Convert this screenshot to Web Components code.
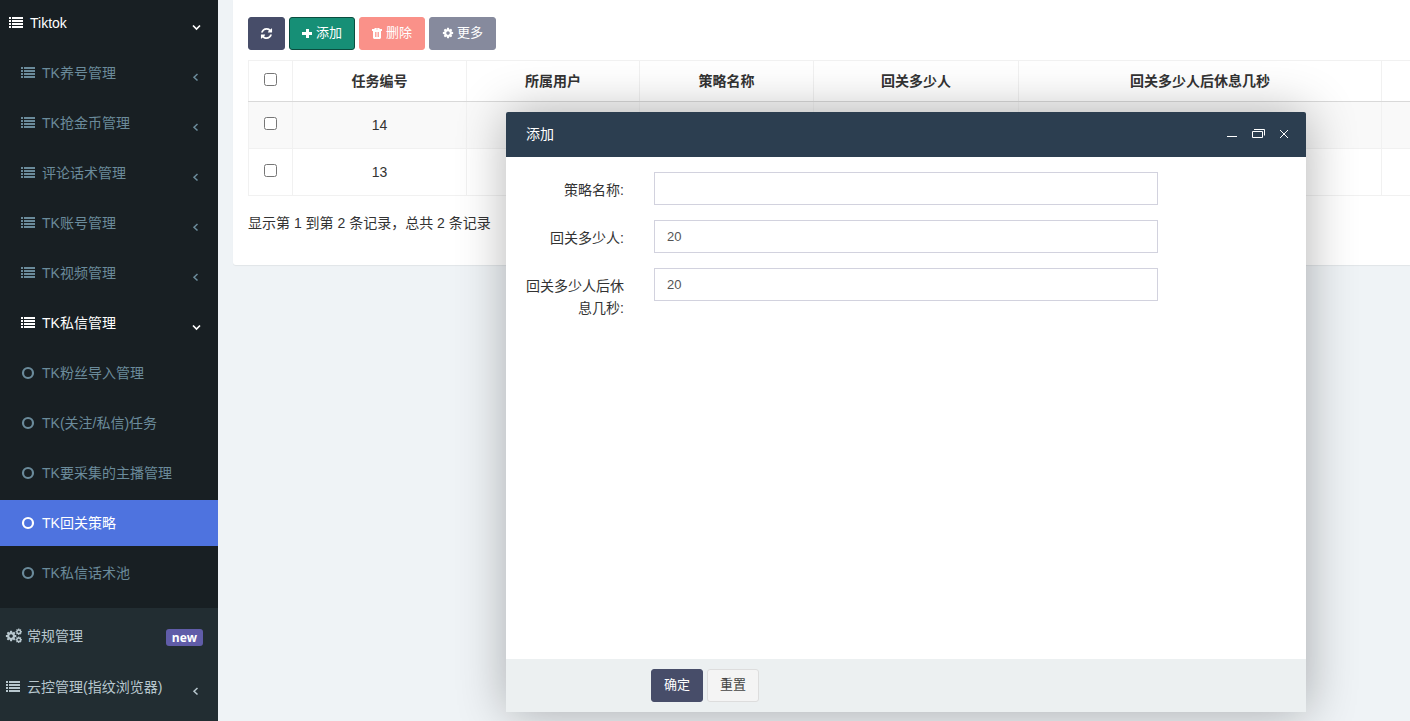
<!DOCTYPE html>
<html lang="zh-CN">
<head>
<meta charset="utf-8">
<title>TK回关策略</title>
<style>
  html, body { margin: 0; height: 100%; }
  body { font: 14px/20px "Liberation Sans", "Noto Sans CJK SC", sans-serif; color: #333; background: #eff3f6; overflow: hidden; }
</style>
</head>
<body>
<admin-app></admin-app>
<script>
const COG = 'M1152 896q0-106-75-181t-181-75-181 75-75 181 75 181 181 75 181-75 75-181zm512-109v222q0 12-8 23t-20 13l-185 28q-19 54-39 91 35 50 107 138 10 12 10 25t-9 23q-27 37-99 108t-94 71q-12 0-26-9l-138-108q-44 23-91 38-16 136-29 186-7 28-36 28h-222q-14 0-24.5-8.5t-11.5-21.5l-28-184q-49-16-90-37l-141 107q-10 9-25 9-14 0-25-11-126-114-165-168-7-10-7-23 0-12 8-23 15-21 51-66.5t54-70.5q-27-50-41-99l-183-27q-13-2-21-12.5t-8-23.5v-222q0-12 8-23t19-13l186-28q14-46 39-92-40-57-107-138-10-12-10-24 0-10 9-23 26-36 98.5-107.5t94.5-71.5q13 0 26 10l138 107q44-23 91-38 16-136 29-186 7-28 36-28h222q14 0 24.5 8.5t11.5 21.5l28 184q49 16 90 37l142-107q9-9 24-9 13 0 25 10 129 119 165 170 7 8 7 22 0 12-8 23-15 21-51 66.5t-54 70.5q26 50 41 98l183 28q13 2 21 12.5t8 23.5z';
const ICONS = {
  list: ['0 0 14 14', 14, '<path shape-rendering="crispEdges" d="M0 1h2v2H0zM3 1h11v2H3zM0 4h2v2H0zM3 4h11v2H3zM0 7h2v2H0zM3 7h11v2H3zM0 10h2v2H0zM3 10h11v2H3z"/>'],
  circle: ['0 0 14 14', 14, '<circle cx="7" cy="7" r="5" fill="none" stroke="currentColor" stroke-width="2.2"/>'],
  cogs: ['0 0 16 16', 16, `<g fill-rule="evenodd"><path transform="translate(-1 2) scale(.0068)" d="${COG}"/><path transform="translate(9 0) scale(.0042)" d="${COG}"/><path transform="translate(9 8) scale(.0042)" d="${COG}"/></g>`],
  left: ['0 0 8 8', 8, '<path d="M5.5 1 2 4.2 5.5 7.5" fill="none" stroke="currentColor" stroke-width="1.5"/>'],
  down: ['0 0 8 8', 8, '<path d="M1 2.5 4.5 6 8 2.5" fill="none" stroke="currentColor" stroke-width="1.7"/>'],
  cog: ['0 0 1792 1792', 12, `<path d="${COG}"/>`],
  plus: ['0 0 11 11', 11, '<path d="M4 1h3v3h3v3H7v3H4V7H0V4h4z"/>'],
  refresh: ['0 0 1792 1792', 13, '<path d="M1639 1056q0 5-1 7-64 268-268 434.5t-478 166.5q-146 0-282.5-55t-243.5-157l-129 129q-19 19-45 19t-45-19-19-45v-448q0-26 19-45t45-19h448q26 0 45 19t19 45-19 45l-137 137q71 66 161 102t187 36q134 0 250-65t186-179q11-17 53-117 8-23 30-23h192q13 0 22.5 9.5t9.5 22.5zm25-800v448q0 26-19 45t-45 19h-448q-26 0-45-19t-19-45 19-45l138-138q-148-137-349-137-134 0-250 65t-186 179q-11 17-53 117-8 23-30 23h-199q-13 0-22.5-9.5t-9.5-22.5v-7q65-268 270-434.5t480-166.5q146 0 284 55.5t245 156.5l130-129q19-19 45-19t45 19 19 45z"/>'],
  trash: ['0 0 11 11', 11, '<path fill-rule="evenodd" d="M3 0h4l1 1h2v2H9v7L8 11H2L1 10V3H0V1h2zM3 4v5h.8V4zM4.600 4v5h.8V4zM6.200 4v5H7V4zM4 .8h2v.5H4z"/>'],
  min: ['0 0 14 14', 14, '<path d="M2 9h10v1H2z"/>'],
  restore: ['0 0 14 14', 14, '<path d="M1.5 4.5h10v6h-10zM3 2.5h10.500v6" fill="none" stroke="currentColor"/>'],
  close: ['0 0 14 14', 14, '<path d="m3 3 8 8M11 3l-8 8" fill="none" stroke="currentColor"/>']
};

function define(name, render) {
  customElements.define(name, class extends HTMLElement {
    constructor() { super(); this.attachShadow({ mode: 'open' }); }
    connectedCallback() { this.shadowRoot.innerHTML = render(this); }
  });
}

define('ui-icon', el => {
  const [box, size, body] = ICONS[el.getAttribute('name')];
  return `<style>:host{display:inline-flex;flex:none}svg{display:block;overflow:visible}</style>
    <svg viewBox="${box}" width="${size}" height="${size}" fill="currentColor" aria-hidden="true">${body}</svg>`;
});

define('nav-item', el => {
  const arrow = el.getAttribute('arrow');
  return `<style>
    :host { display: block; color: #6b8b9b; }
    :host([top]) { color: #b8c7ce; }
    :host([open]), :host([active]) { color: #fff; }
    :host([active]) { background: #4e73df; }
    a { display: flex; align-items: center; height: 46px; padding: 0 15px 0 21px; color: inherit; text-decoration: none; white-space: nowrap; }
    :host([top]) a { padding-left: 6px; }
    :host([root]) a { padding-left: 9px; }
    span { flex: 1; margin-left: 7px; }
    :host([top]) ui-icon:first-child { width: 14px; }
    .arrow { margin: 8px 3px 0 0; }
  </style>
  <a href="#"><ui-icon name="${el.getAttribute('icon')}"></ui-icon><span><slot></slot></span>
  ${arrow ? `<ui-icon class="arrow" name="${arrow}"></ui-icon>` : ''}<slot name="badge"></slot></a>`;
});

define('nav-badge', () => `<style>
  :host { display: block; background: #605ca8; color: #fff; border-radius: 3px; padding: 0 6px; margin-top: 2px; font: bold 12px/17px "Open Sans", sans-serif; }
</style><slot></slot>`);

define('side-nav', () => `<style>
  :host { display: block; background: #222d32; overflow: hidden; }
  .tree { display: grid; gap: 4px; background: #181f23; padding-bottom: 12px; }
  .rest { display: grid; gap: 5px; padding-top: 5px; }
</style>
<nav>
  <div class="tree">
    <nav-item root open icon="list" arrow="down">Tiktok</nav-item>
    <nav-item icon="list" arrow="left">TK养号管理</nav-item>
    <nav-item icon="list" arrow="left">TK抢金币管理</nav-item>
    <nav-item icon="list" arrow="left">评论话术管理</nav-item>
    <nav-item icon="list" arrow="left">TK账号管理</nav-item>
    <nav-item icon="list" arrow="left">TK视频管理</nav-item>
    <nav-item open icon="list" arrow="down">TK私信管理</nav-item>
    <nav-item icon="circle">TK粉丝导入管理</nav-item>
    <nav-item icon="circle">TK(关注/私信)任务</nav-item>
    <nav-item icon="circle">TK要采集的主播管理</nav-item>
    <nav-item active icon="circle">TK回关策略</nav-item>
    <nav-item icon="circle">TK私信话术池</nav-item>
  </div>
  <div class="rest">
    <nav-item top icon="cogs">常规管理<nav-badge slot="badge">new</nav-badge></nav-item>
    <nav-item top icon="list" arrow="left">云控管理(指纹浏览器)</nav-item>
  </div>
</nav>`);

define('ui-button', el => {
  const icon = el.getAttribute('icon'), label = el.getAttribute('label');
  return `<style>
    :host { display: block; --bg: #474d69; --line: #474d69; --ink: #fff; }
    :host([kind=success]) { --bg: #168f76; --line: #0b4d3f; }
    :host([kind=danger]) { --bg: #fa9189; --line: #fa9189; }
    :host([kind=muted]) { --bg: #868a9d; --line: #868a9d; }
    :host([kind=plain]) { --bg: #f4f4f4; --line: #ddd; --ink: #444; }
    button { display: flex; align-items: center; gap: 3px; height: 33px; padding: 0 12px 1px; box-sizing: border-box; border: 1px solid var(--line); border-radius: 3px; background: var(--bg); color: var(--ink); font: 13px/20px "Liberation Sans", "Noto Sans CJK SC", sans-serif; white-space: nowrap; }
    :host([label]) button { padding: 0 11px; }
  </style>
  <button type="button" ${label ? `aria-label="${label}"` : ''}>${icon ? `<ui-icon name="${icon}"></ui-icon>` : ''}<slot></slot></button>`;
});

define('task-table', () => `<style>
  :host { display: block; overflow: hidden; }
  table { width: 100%; table-layout: fixed; border-collapse: collapse; }
  .c0 { width: 44px } .c1 { width: 174px } .c2 { width: 205px } .c3 { width: 363px } .c4 { width: 173px }
  th, td { border: 1px solid #f1f1f1; padding: 0; height: 46px; text-align: center; box-sizing: border-box; }
  th:last-child, td:last-child { border-right: 0; }
  th { height: 41px; font-weight: bold; border-bottom: 1px solid #d9d9d9; }
  tbody tr { height: 47px; }
  tbody tr:first-child { background: #f9f9f9; }
  input { display: block; width: 13px; height: 13px; margin: 0 auto 3px; }
</style>
<table>
  <colgroup><col class="c0"><col class="c1"><col class="c4"><col class="c1"><col class="c2"><col class="c3"><col></colgroup>
  <thead><tr><th><input type="checkbox" aria-label="全选"></th><th>任务编号</th><th>所属用户</th><th>策略名称</th><th>回关多少人</th><th>回关多少人后休息几秒</th><th></th></tr></thead>
  <tbody>
    <tr><td><input type="checkbox" aria-label="14"></td><td>14</td><td></td><td></td><td></td><td></td><td></td></tr>
    <tr><td><input type="checkbox" aria-label="13"></td><td>13</td><td></td><td></td><td></td><td></td><td></td></tr>
  </tbody>
</table>`);

define('list-panel', () => `<style>
  :host { display: block; background: #fff; padding: 17px 0 32px 15px; border-bottom-left-radius: 3px; box-shadow: 0 1px 1px rgba(0,0,0,.06); }
  .tools { display: flex; gap: 4px; margin-bottom: 10px; }
  p { margin: 17px 0 0; }
</style>
<div class="tools">
  <ui-button kind="primary" icon="refresh" label="刷新"></ui-button>
  <ui-button kind="success" icon="plus">添加</ui-button>
  <ui-button kind="danger" icon="trash">删除</ui-button>
  <ui-button kind="muted" icon="cog">更多</ui-button>
</div>
<task-table></task-table>
<p>显示第 1 到第 2 条记录，总共 2 条记录</p>`);

define('form-row', el => `<style>
  :host { display: grid; grid-template-columns: 98px minmax(0, 504px); column-gap: 30px; align-items: start; }
  label { text-align: right; line-height: 22px; padding-top: 7px; }
  input { width: 100%; height: 33px; box-sizing: border-box; border: 1px solid #d2d2de; border-radius: 0; padding: 0 12px; background: #fff; color: #555; font: 13px/20px "Liberation Sans", sans-serif; }
</style>
<label for="field">${el.getAttribute('label')}</label><input id="field" type="text" value="${el.getAttribute('value') || ''}">`);

define('dialog-window', () => `<style>
  :host { display: flex; flex-direction: column; background: #fff; border-radius: 2px; box-shadow: 1px 1px 50px rgba(0,0,0,.3); }
  header { display: flex; align-items: center; gap: 12px; height: 44px; padding: 0 15px 1px 20px; background: #2c3e50; color: #fff; border-radius: 2px 2px 0 0; }
  h2 { flex: 1; margin: 0; font-size: 14px; font-weight: 400; }
  header button { display: flex; padding: 0; border: 0; background: none; color: inherit; }
  form { flex: 1; display: flex; flex-direction: column; gap: 15px; padding: 15px 20px; }
  footer { display: flex; gap: 4px; padding: 10px 145px; background: #ecf0f1; }
</style>
<header><h2>添加</h2>
  <button type="button" aria-label="最小化"><ui-icon name="min"></ui-icon></button>
  <button type="button" aria-label="还原"><ui-icon name="restore"></ui-icon></button>
  <button type="button" aria-label="关闭"><ui-icon name="close"></ui-icon></button>
</header>
<form>
  <form-row label="策略名称:"></form-row>
  <form-row label="回关多少人:" value="20"></form-row>
  <form-row label="回关多少人后休息几秒:" value="20"></form-row>
</form>
<footer><ui-button kind="primary">确定</ui-button><ui-button kind="plain">重置</ui-button></footer>`);

define('admin-app', () => `<style>
  :host { display: grid; grid-template-columns: 218px minmax(0, 1fr); min-height: 100vh; }
  main { padding-left: 15px; }
  dialog-window { position: absolute; right: 104px; top: 112px; bottom: 9px; width: 800px; max-width: 70%; }
</style>
<side-nav></side-nav>
<main><list-panel></list-panel></main>
<dialog-window role="dialog" aria-label="添加"></dialog-window>`);
</script>
</body>
</html>
